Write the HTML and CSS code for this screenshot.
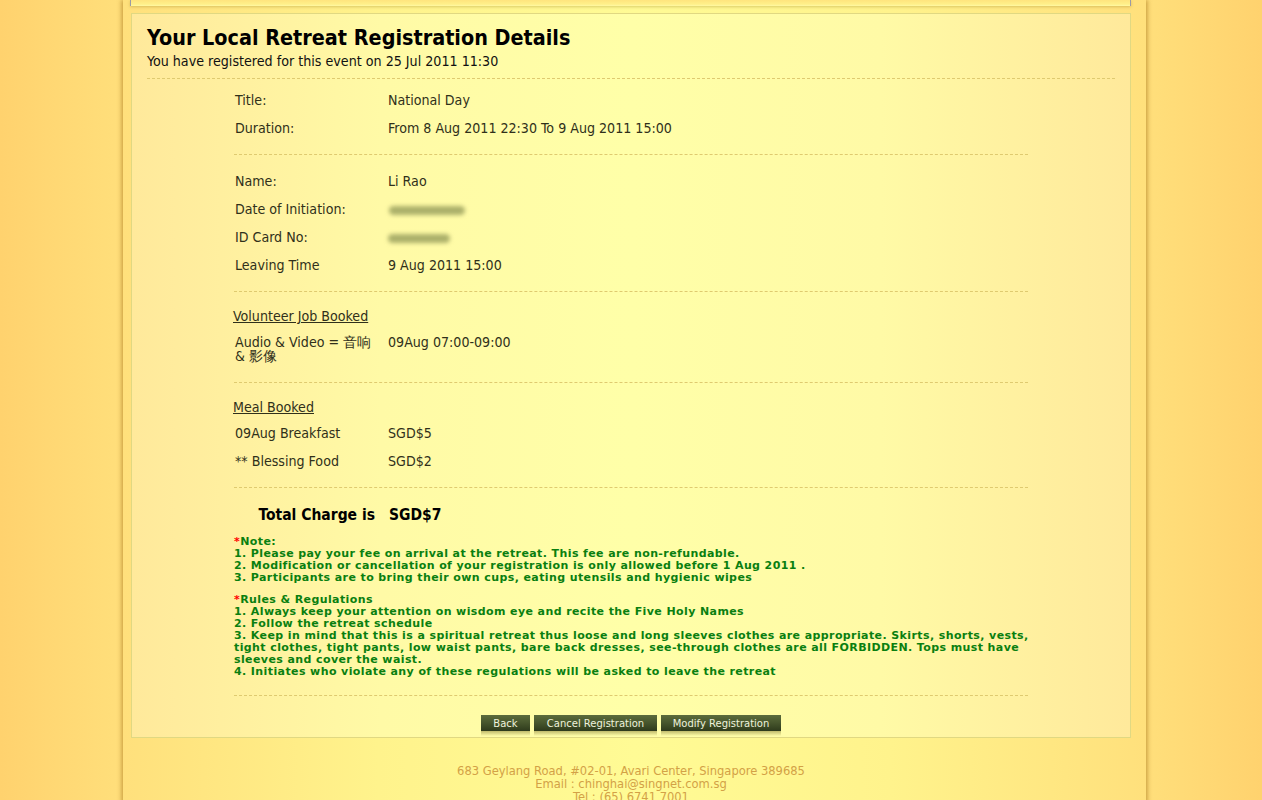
FILE: index.html
```html
<!DOCTYPE html>
<html lang="en">
<head>
<meta charset="utf-8">
<title>Your Local Retreat Registration Details</title>
<link rel="stylesheet" href="styles.css">
</head>
<body>
<div class="page">
  <div class="topbar"></div>
  <div class="panel">
    <h1 class="title">Your Local Retreat Registration Details</h1>
    <p class="subtitle">You have registered for this event on 25 Jul 2011 11:30</p>
    <div class="details">
      <div class="block block-first">
        <div class="row"><div class="label">Title:</div><div class="value">National Day</div></div>
        <div class="row"><div class="label">Duration:</div><div class="value">From 8 Aug 2011 22:30 To 9 Aug 2011 15:00</div></div>
      </div>
      <div class="block">
        <div class="row"><div class="label">Name:</div><div class="value">Li Rao</div></div>
        <div class="row"><div class="label">Date of Initiation:</div><div class="value"><span class="blur blur-a"></span></div></div>
        <div class="row"><div class="label">ID Card No:</div><div class="value"><span class="blur blur-b"></span></div></div>
        <div class="row"><div class="label">Leaving Time</div><div class="value">9 Aug 2011 15:00</div></div>
      </div>
      <div class="block">
        <div class="heading">Volunteer Job Booked</div>
        <div class="row"><div class="label">Audio &amp; Video = 音响 &amp; 影像</div><div class="value">09Aug 07:00-09:00</div></div>
      </div>
      <div class="block">
        <div class="heading">Meal Booked</div>
        <div class="row"><div class="label">09Aug Breakfast</div><div class="value">SGD$5</div></div>
        <div class="row"><div class="label">** Blessing Food</div><div class="value">SGD$2</div></div>
      </div>
      <div class="block block-total">
        <div class="total"><div class="total-label">Total Charge is</div><div class="total-value">SGD$7</div></div>
        <div class="notes">
          <div class="note-group">
            <div><span class="star">*</span>Note:</div>
            <div>1. Please pay your fee on arrival at the retreat. This fee are non-refundable.</div>
            <div>2. Modification or cancellation of your registration is only allowed before 1 Aug 2011 .</div>
            <div>3. Participants are to bring their own cups, eating utensils and hygienic wipes</div>
          </div>
          <div class="note-group">
            <div><span class="star">*</span>Rules &amp; Regulations</div>
            <div>1. Always keep your attention on wisdom eye and recite the Five Holy Names</div>
            <div>2. Follow the retreat schedule</div>
            <div>3. Keep in mind that this is a spiritual retreat thus loose and long sleeves clothes are appropriate. Skirts, shorts, vests, tight clothes, tight pants, low waist pants, bare back dresses, see-through clothes are all FORBIDDEN. Tops must have sleeves and cover the waist.</div>
            <div>4. Initiates who violate any of these regulations will be asked to leave the retreat</div>
          </div>
        </div>
      </div>
      <div class="actions">
        <button class="btn btn-back" type="button">Back</button>
        <button class="btn btn-cancel" type="button">Cancel Registration</button>
        <button class="btn btn-modify" type="button">Modify Registration</button>
      </div>
    </div>
  </div>
  <footer class="footer">
    <div>683 Geylang Road, #02-01, Avari Center, Singapore 389685</div>
    <div>Email : chinghai@singnet.com.sg</div>
    <div>Tel : (65) 6741 7001</div>
  </footer>
</div>
</body>
</html>
```
FILE: styles.css
```css
html, body {
  margin: 0;
  padding: 0;
  height: 100%;
}
body {
  background: linear-gradient(to right, #ffd26e 0, #ffdf7b 123px, #ffe07c 50%, #ffdf7b 1146px, #ffd26e 100%);
  font-family: "DejaVu Sans Condensed", "DejaVu Sans", sans-serif;
  color: #30301a;
  overflow: hidden;
}
.page {
  margin-left: 123px;
  width: 1023px;
  min-height: 800px;
  box-sizing: border-box;
  padding: 0 15px 0 8px;
  background: linear-gradient(to right, #ffe07c 0, #fff38c 25%, #fffb95 50%, #fff38c 75%, #ffe07c 100%);
  box-shadow: -2px 0 4px rgba(160, 110, 20, 0.45), 2px 0 4px rgba(160, 110, 20, 0.45);
}
.topbar {
  height: 6px;
  margin-left: -1px;
  border-left: 1px solid #9a9aa6;
  border-right: 1px solid #9a9aa6;
  background: linear-gradient(to bottom, #ffe47e, #fff08a 70%, #fff8a4);
  box-shadow: 0 1px 3px rgba(150, 120, 30, 0.35);
}
.panel {
  margin-top: 7px;
  border: 1px solid #e0d882;
  padding: 12px 15px 0;
  background: linear-gradient(to right, #ffe99b 0, #fffaa6 25%, #ffffa8 50%, #fffaa6 75%, #ffe99b 100%);
}
.title {
  margin: 0;
  font-size: 21.4px;
  line-height: 24px;
  font-weight: bold;
  color: #000;
}
.subtitle {
  margin: 3px 0 0;
  font-size: 14.15px;
  line-height: 16px;
  color: #111;
  padding-bottom: 9px;
  border-bottom: 1px dashed #dfca70;
}
.details {
  width: 794px;
  margin: 0 auto;
}
.block {
  padding: 12px 0;
  border-bottom: 1px dashed #dfca70;
}
.block-first {
  padding-top: 7px;
}
.heading {
  margin: 4px 0 4px -1px;
  font-size: 14.1px;
  line-height: 16px;
  text-decoration: underline;
}
.row {
  display: flex;
  font-size: 14.1px;
  line-height: 14px;
  padding: 7px 0;
}
.label {
  width: 154px;
  padding-left: 1px;
  padding-right: 4px;
  box-sizing: border-box;
  flex: none;
}
.value {
  flex: 1;
}
.blur {
  display: inline-block;
  vertical-align: middle;
  height: 9px;
  border-radius: 5px;
  background: #acb06a;
  filter: blur(2px);
}
.blur-a {
  width: 76px;
  margin-left: 1px;
}
.blur-b {
  width: 62px;
}
.block-total {
  padding: 17px 0 17px;
}
.total {
  display: flex;
  font-size: 15.5px;
  line-height: 20px;
  font-weight: bold;
  color: #000;
}
.total-label {
  width: 155px;
  padding-right: 14px;
  box-sizing: border-box;
  text-align: right;
}
.notes {
  margin: 11px -4px 0 0;
  font-family: "DejaVu Sans", sans-serif;
  font-size: 11px;
  line-height: 12px;
  letter-spacing: 0.4px;
  font-weight: bold;
  color: #0a7f10;
}
.note-group + .note-group {
  margin-top: 10px;
}
.star {
  color: #ff0000;
}
.actions {
  display: flex;
  justify-content: center;
  gap: 4px;
  padding: 19px 0 6px;
}
.btn {
  position: relative;
  height: 16px;
  padding: 0;
  border: 0;
  font-family: "DejaVu Sans", sans-serif;
  font-size: 10px;
  line-height: 15px;
  color: #eef2dc;
  background: linear-gradient(to bottom, #5c6c3c 0, #46552c 50%, #2e3a1c 100%);
}
.btn::after {
  content: "";
  position: absolute;
  left: 0;
  right: 0;
  top: 16px;
  height: 5px;
  background: linear-gradient(to bottom, rgba(140, 130, 60, 0.55), rgba(220, 210, 130, 0));
}
.btn-back { width: 49px; }
.btn-cancel { width: 123px; }
.btn-modify { width: 120px; }
.footer {
  margin-top: 26px;
  text-align: center;
  font-size: 12.8px;
  line-height: 13px;
  color: #d3a146;
}
```
